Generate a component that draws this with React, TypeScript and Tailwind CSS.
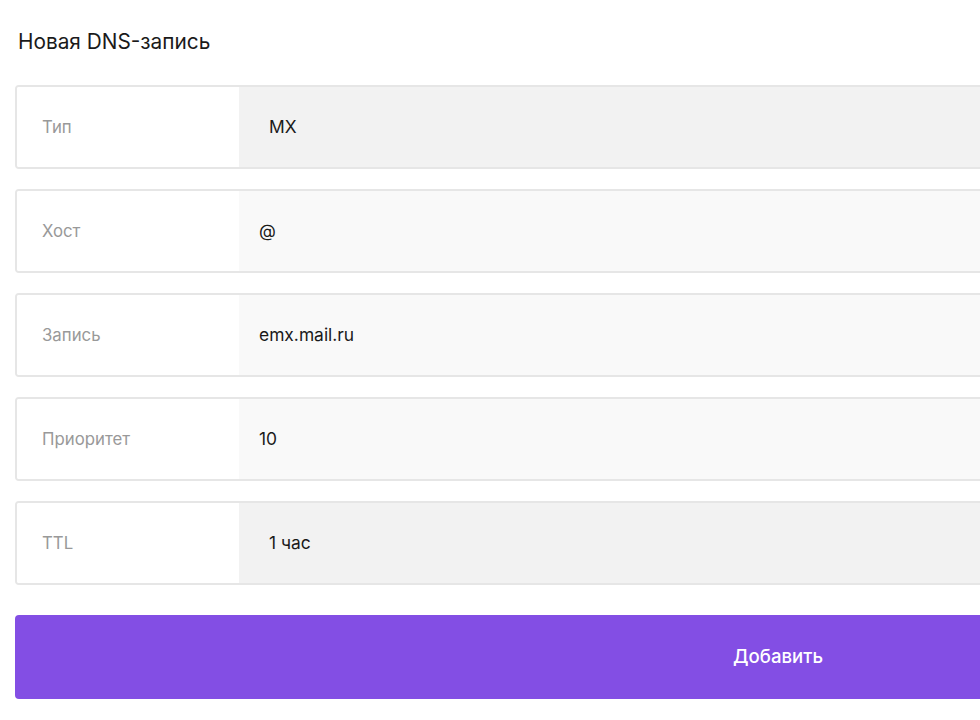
import React, { useState } from 'react';

type Field = {
  label: string;
  value: string;
  kind: 'select' | 'input';
};

const fields: Field[] = [
  { label: 'Тип', value: 'MX', kind: 'select' },
  { label: 'Хост', value: '@', kind: 'input' },
  { label: 'Запись', value: 'emx.mail.ru', kind: 'input' },
  { label: 'Приоритет', value: '10', kind: 'input' },
  { label: 'TTL', value: '1 час', kind: 'select' },
];

const FieldRow: React.FC<{ field: Field }> = ({ field }) => {
  const [value, setValue] = useState(field.value);

  return (
    <div className="flex h-[84px] border-2 border-[#e6e6e6] rounded-[4px] overflow-hidden">
      <div className="w-[222px] flex-shrink-0 bg-white flex items-center pl-[25px] pt-[2px] text-[16.8px] text-[#999999]">
        {field.label}
      </div>
      {field.kind === 'select' ? (
        <div className="flex-1 bg-[#f2f2f2] flex items-center pl-[30px] text-[17.4px] text-[#1a1a1a]">
          {value}
        </div>
      ) : (
        <input
          value={value}
          onChange={(e) => setValue(e.target.value)}
          className="flex-1 bg-[#f9f9f9] pl-[20px] text-[17.4px] text-[#1a1a1a] outline-none"
        />
      )}
    </div>
  );
};

const App: React.FC = () => {
  return (
    <div className="w-[980px] h-[720px] overflow-hidden bg-white font-['Inter',_'Liberation_Sans',_sans-serif]">
      <div className="w-[1526px] ml-[15px] pt-[28px]">
        <h2 className="pl-[3px] text-[20.8px] leading-[28px] text-[#1a1a1a] font-normal">Новая DNS-запись</h2>

        {/* Fields */}
        <div className="mt-[29px] flex flex-col gap-[20px]">
          {fields.map((f) => (
            <FieldRow key={f.label} field={f} />
          ))}
        </div>

        <button className="mt-[30px] w-full h-[84px] rounded-[4px] bg-[#834ee4] text-white text-[18.6px] font-medium">
          Добавить
        </button>
      </div>
    </div>
  );
};

export default App;
